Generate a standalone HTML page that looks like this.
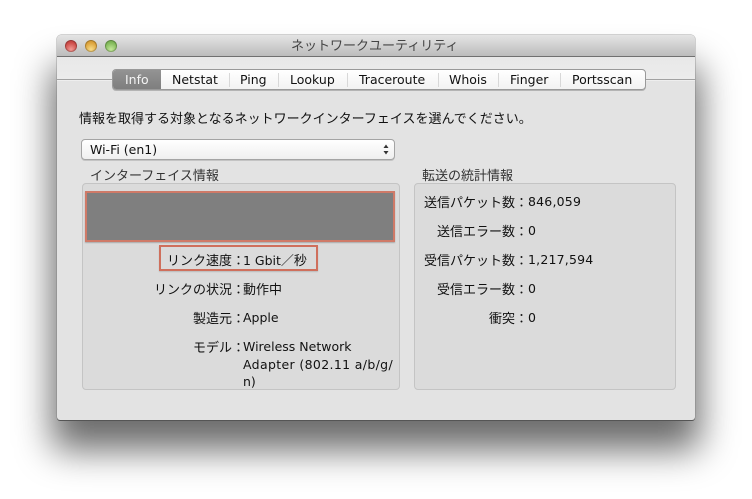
<!DOCTYPE html>
<html lang="ja"><head><meta charset="utf-8">
<style>
html,body{margin:0;padding:0;background:#fff;}
body{width:752px;height:499px;position:relative;overflow:hidden;font-family:"DejaVu Sans","Noto Sans CJK JP",sans-serif;font-size:12.5px;color:#111;}
#all{position:absolute;left:0;top:0;width:752px;height:499px;filter:blur(.35px);}
.a{position:absolute;white-space:nowrap;line-height:16px;}
.r{position:absolute;white-space:nowrap;line-height:16px;text-align:right;font-family:"Noto Sans CJK JP",sans-serif;font-size:13px;}
.j{font-family:"Noto Sans CJK JP",sans-serif;font-size:13px;}
#shadow{position:absolute;left:52px;top:66px;width:648px;height:384px;background:rgba(0,0,0,.58);filter:blur(18px);border-radius:10px;}
#win{position:absolute;left:57px;top:35px;width:638px;height:385px;background:#e3e3e3;border-radius:4px 4px 3px 3px;box-shadow:0 1px 0 #555,0 0 0 .5px rgba(110,110,110,.6);overflow:hidden;}
#up{position:absolute;left:0;top:22px;width:638px;height:22px;background:linear-gradient(#e8e8e8,#ececec);}
#tb{position:absolute;left:0;top:0;width:638px;height:21px;background:linear-gradient(#e4e4e4,#bcbcbc);border-bottom:1px solid #707070;}
.light{position:absolute;top:5px;width:12px;height:12px;border-radius:50%;box-shadow:inset 0 0 0 1px rgba(0,0,0,.22);}
#line{position:absolute;left:57px;top:79px;width:638px;height:1px;background:#a2a2a2;box-shadow:0 1px 0 #eee;}
#tabs{position:absolute;left:112px;top:69px;width:532px;height:19px;background:linear-gradient(#fff,#f2f2f2);border:1px solid #999;border-radius:4px;box-shadow:0 1px 0 #b4b4b4;overflow:hidden;}
#info{position:absolute;left:0;top:0;width:48px;height:19px;background:linear-gradient(#939393,#7e7e7e);}
.sep{position:absolute;top:3px;width:1px;height:14px;background:#d8d8d8;}
.tab{position:absolute;top:71px;line-height:18px;font-size:12.5px;white-space:nowrap;color:#111;}
#sel{position:absolute;left:81px;top:139px;width:312px;height:19px;background:linear-gradient(#fff,#efefef);border:1px solid #a4a4a4;border-radius:4px;box-shadow:0 1px 0 #c4c4c4;}
.box{position:absolute;background:#dbdbdb;border:1px solid #c4c4c4;border-radius:4px;box-sizing:border-box;}
</style></head><body>
<div id="all">
<div id="shadow"></div>
<div id="win">
<div id="up"></div>
<div id="tb"></div>
<div class="light" style="left:8px;background:radial-gradient(circle at 50% 78%,#f29a94,#cc4a46 62%,#b23c3a)"></div>
<div class="light" style="left:28px;background:radial-gradient(circle at 50% 78%,#f8dc88,#dca23a 62%,#c08c2c)"></div>
<div class="light" style="left:48px;background:radial-gradient(circle at 50% 78%,#c4e89a,#80b858 62%,#6a9c48)"></div>
</div>
<div class="a j" style="left:291px;top:37px;color:#444">ネットワークユーティリティ</div>
<div id="line"></div>
<div id="tabs"><div id="info"></div>
<div class="sep" style="left:116px"></div>
<div class="sep" style="left:165px"></div>
<div class="sep" style="left:234px"></div>
<div class="sep" style="left:325px"></div>
<div class="sep" style="left:385px"></div>
<div class="sep" style="left:447px"></div>
</div>
<div class="tab" style="left:125px;color:#f4f4f4">Info</div>
<div class="tab" style="left:172px">Netstat</div>
<div class="tab" style="left:240px">Ping</div>
<div class="tab" style="left:290px">Lookup</div>
<div class="tab" style="left:359px">Traceroute</div>
<div class="tab" style="left:449px">Whois</div>
<div class="tab" style="left:510px">Finger</div>
<div class="tab" style="left:572px">Portsscan</div>
<div class="a j" style="left:79px;top:110px;">情報を取得する対象となるネットワークインターフェイスを選んでください。</div>
<div id="sel"></div>
<div class="a" style="left:90px;top:142px">Wi-Fi (en1)</div>
<svg style="position:absolute;left:382px;top:143px" width="8" height="13"><path d="M4 1.5L6.5 5H1.5Z M4 11.5L6.5 8H1.5Z" fill="#333"/></svg>
<div class="a j" style="left:90px;top:167px;color:#333">インターフェイス情報</div>
<div class="a j" style="left:422px;top:167px;color:#333">転送の統計情報</div>
<div class="box" style="left:82px;top:183px;width:318px;height:207px"></div>
<div class="box" style="left:414px;top:183px;width:262px;height:207px"></div>
<div style="position:absolute;left:85px;top:191px;width:310px;height:51px;box-sizing:border-box;background:#7f7f7f;border:2px solid #cf7a68;box-shadow:0 1px 1px #aaa"></div>
<div style="position:absolute;left:159px;top:245px;width:159px;height:26px;box-sizing:border-box;border:2px solid #cf6f5c;box-shadow:0 1px 1px #bbb"></div>
<div class="r" style="right:507px;top:252px">リンク速度：</div><div class="a" style="left:243px;top:252px">1 Gbit<span class="j">／秒</span></div>
<div class="r" style="right:507px;top:281px">リンクの状況：</div><div class="a j" style="left:243px;top:281px">動作中</div>
<div class="r" style="right:507px;top:310px">製造元：</div><div class="a" style="left:243px;top:310px">Apple</div>
<div class="r" style="right:507px;top:339px">モデル：</div>
<div class="a" style="left:243px;top:339px">Wireless Network</div>
<div class="a" style="left:243px;top:357px;letter-spacing:.35px">Adapter (802.11 a/b/g/</div>
<div class="a" style="left:243px;top:374px">n)</div>
<div class="r" style="right:224px;top:194px">送信パケット数：</div><div class="a" style="left:528px;top:194px;letter-spacing:.2px">846,059</div>
<div class="r" style="right:224px;top:223px">送信エラー数：</div><div class="a" style="left:528px;top:223px">0</div>
<div class="r" style="right:224px;top:252px">受信パケット数：</div><div class="a" style="left:528px;top:252px;letter-spacing:.2px">1,217,594</div>
<div class="r" style="right:224px;top:281px">受信エラー数：</div><div class="a" style="left:528px;top:281px">0</div>
<div class="r" style="right:224px;top:310px">衝突：</div><div class="a" style="left:528px;top:310px">0</div>
</div>
</body></html>
